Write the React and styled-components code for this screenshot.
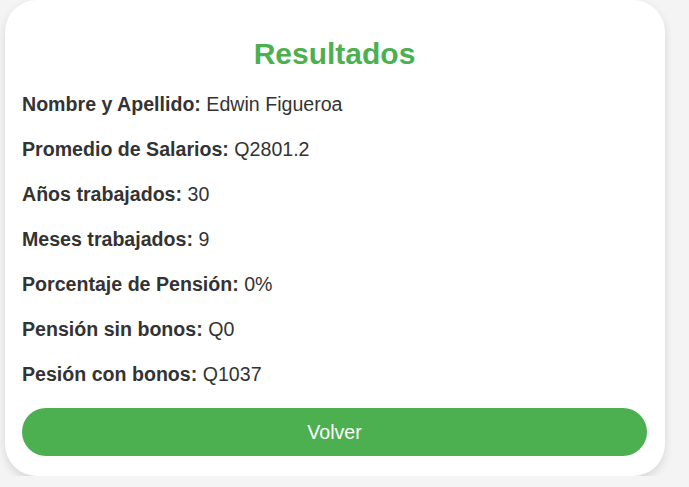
import React from 'react';
import styled, { createGlobalStyle } from 'styled-components';

const GlobalStyle = createGlobalStyle`
  body {
    margin: 0;
    background: #f4f4f4;
    font-family: 'Liberation Sans', Arial, sans-serif;
    overflow: hidden;
  }
`;

const Page = styled.div`
  width: 670px;
  display: flex;
  justify-content: center;
`;

const Card = styled.div`
  box-sizing: border-box;
  width: 660px;
  height: 476px;
  background: #fff;
  border-radius: 32px;
  padding: 36px 18px 0 17px;
  box-shadow: 0 4px 10px rgba(0, 0, 0, 0.12);
`;

const Title = styled.h2`
  margin: 0 0 10px;
  height: 36px;
  line-height: 36px;
  text-align: center;
  color: #4caf50;
  font-size: 30px;
  font-weight: bold;
`;

const List = styled.div`
  display: flex;
  flex-direction: column;
`;

const Row = styled.p`
  margin: 0;
  height: 45px;
  line-height: 45px;
  font-size: 19.6px;
  color: #333;
  white-space: nowrap;
`;

const Label = styled.strong`
  font-weight: bold;
`;

const Button = styled.button`
  display: block;
  width: 100%;
  height: 48px;
  margin-top: 11px;
  border: none;
  border-radius: 24px;
  background: #4caf50;
  color: #fff;
  font-family: 'Liberation Sans', Arial, sans-serif;
  font-size: 19.6px;
  cursor: pointer;
`;

const rows = [
  ['Nombre y Apellido:', 'Edwin Figueroa'],
  ['Promedio de Salarios:', 'Q2801.2'],
  ['Años trabajados:', '30'],
  ['Meses trabajados:', '9'],
  ['Porcentaje de Pensión:', '0%'],
  ['Pensión sin bonos:', 'Q0'],
  ['Pesión con bonos:', 'Q1037'],
];

const App = () => {
  return (
    <>
      <GlobalStyle />
      <Page>
        <Card>
          <Title>Resultados</Title>
          <List>
            {rows.map(([label, value]) => (
              <Row key={label}>
                <Label>{label}</Label> {value}
              </Row>
            ))}
          </List>
          <Button>Volver</Button>
        </Card>
      </Page>
    </>
  );
};

export default App;
